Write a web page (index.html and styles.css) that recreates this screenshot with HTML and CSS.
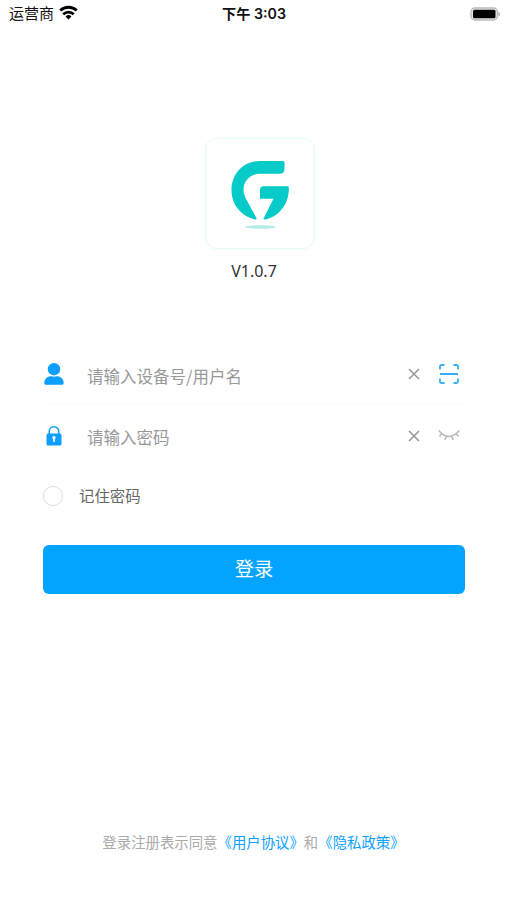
FILE: index.html
```html
<!DOCTYPE html>
<html lang="zh-CN">
<head>
    <meta charset="UTF-8">
    <meta name="viewport" content="width=device-width, initial-scale=1.0">
    <title>登录</title>
    <link rel="stylesheet" href="styles.css">
</head>
<body>
    <div class="screen">
        <header class="status-bar">
            <div class="carrier">
                <span>运营商</span>
                <svg class="wifi" viewBox="0 0 18 14">
                    <path d="M1.2 5.2a11.2 11.2 0 0 1 15.6 0" fill="none" stroke="#000" stroke-width="2.7"/>
                    <path d="M4 8.6a7.2 7.2 0 0 1 10 0" fill="none" stroke="#000" stroke-width="2.5"/>
                    <path d="M9 13.6 6.2 10.8a4 4 0 0 1 5.6 0z"/>
                </svg>
            </div>
            <div class="time">下午 3:03</div>
            <svg class="battery" viewBox="0 0 31 15">
                <rect x="1" y="1" width="26.5" height="12" rx="4" fill="#e8e8e8" stroke="#bbb" stroke-width="1.4"/>
                <rect x="3" y="2.7" width="22.5" height="8.6" rx="1.5"/>
                <path d="M28.5 4.7a2.5 2.5 0 0 1 0 4.6z" fill="#aaa"/>
            </svg>
        </header>

        <section class="brand">
            <div class="logo">
                <svg viewBox="0 0 60 70">
                    <path d="M52 0H29C12 0 .5 13 .5 29c0 15 10 26.500 24 29.500 1 .2 1.500-.5 1-1.300L14.500 37C8.500 24 17 12.700 29 12.700h20.500q4-.5 4-5V1.500Q53.500 0 52 0z" fill="#07cbc9"/>
                    <path d="M32.500 25.300h24.300q1 0 1 1.200C58.500 42.500 48 56 34 58.500c-1.300.2-1.800-.6-1.200-1.600l9.700-19.200H29V29q0-3.700 3.500-3.700z" fill="#07cbc9"/>
                    <ellipse cx="29.500" cy="66" rx="15.500" ry="1.800" fill="#b4ebe9"/>
                </svg>
            </div>
            <p class="version">V1.0.7</p>
        </section>

        <form class="login-form">
            <div class="field">
                <svg class="field-icon" viewBox="0 0 22 24">
                    <circle cx="11" cy="7.2" r="6.2"/>
                    <path d="M2.500 22.700C.5 22.700 1 17.500 4 15.500q2.500-1.500 4.500-1.200 2.500.8 5 0 2-.3 4.500 1.200c3 2 3.500 7.200 1.500 7.200z"/>
                </svg>
                <input class="field-input" type="text" placeholder="请输入设备号/用户名">
                <svg class="clear" viewBox="0 0 14 14">
                    <path d="M2 2l10 10M12 2 2 12"/>
                </svg>
                <svg class="scan" viewBox="0 0 22 22">
                    <path d="M2 6.500V3.500Q2 2 3.500 2h3M15.500 2h3Q20 2 20 3.500v3M20 15.500v3q0 1.500-1.500 1.500h-3M6.500 20h-3Q2 20 2 18.500v-3M2 11h18"/>
                </svg>
            </div>
            <div class="field">
                <svg class="field-icon" viewBox="0 0 22 24">
                    <path d="M6.200 10V7.500a4.800 4.800 0 0 1 9.600 0V10" fill="none" stroke="#0c9fff" stroke-width="1.5"/>
                    <rect x="3.500" y="9.500" width="15" height="12" rx="1.500"/>
                    <path d="M11 12a1.700 1.700 0 0 0-.8 3.200V18h1.600v-2.800A1.700 1.700 0 0 0 11 12z" fill="#fff"/>
                </svg>
                <input class="field-input" type="password" placeholder="请输入密码">
                <svg class="clear" viewBox="0 0 14 14">
                    <path d="M2 2l10 10M12 2 2 12"/>
                </svg>
                <svg class="eye" viewBox="0 0 22 22">
                    <path d="M.7 5.500q10.300 12 20.600 0M3.700 8.500l-2.200 3M8.200 11l-1.200 4M13.800 11l1.200 4M18.300 8.500l2.200 3"/>
                </svg>
            </div>

            <label class="remember">
                <input class="remember-check" type="checkbox">
                <span>记住密码</span>
            </label>

            <button class="login-button" type="button">登录</button>
        </form>

        <footer class="agreement">登录注册表示同意<a class="agreement-link" href="#">《用户协议》</a>和<a class="agreement-link" href="#">《隐私政策》</a></footer>
    </div>
</body>
</html>
```
FILE: styles.css
```css
* {
    margin: 0;
    padding: 0;
    box-sizing: border-box;
}

body {
    font-family: "Liberation Sans", "Noto Sans CJK SC", sans-serif;
    background: #fff;
    color: #333;
}

.screen {
    display: flex;
    flex-direction: column;
    height: 900px;
    overflow: hidden;
}

/* status bar */
.status-bar {
    display: grid;
    grid-template-columns: 1fr auto 1fr;
    align-items: center;
    height: 28px;
    padding: 0 6px 0 9px;
    color: #111;
}

.carrier {
    display: flex;
    align-items: center;
    gap: 5px;
    font-size: 15px;
    line-height: 28px;
}

.wifi {
    width: 19px;
    height: 15px;
    margin-top: -3px;
}

.time {
    padding-right: 2px;
    font-family: Inter, "Noto Sans CJK SC", sans-serif;
    font-size: 14.2px;
    font-weight: 600;
    line-height: 28px;
}

.battery {
    width: 31px;
    height: 15px;
    justify-self: end;
}

/* logo and version */
.brand {
    display: flex;
    flex-direction: column;
    align-items: center;
    padding: 110px 0 0 12px;
}

.logo {
    display: flex;
    justify-content: center;
    width: 110px;
    height: 111px;
    padding: 22px 0 0 2px;
    border: 1px solid #e2fbf7;
    border-radius: 12px;
    box-shadow: 0 0 3px #effdfb;
}

.logo svg {
    width: 60px;
    height: 70px;
}

.version {
    margin-top: 10px;
    padding-right: 11px;
    font-family: "Noto Sans", sans-serif;
    font-size: 16px;
    line-height: 24px;
}

/* form */
.login-form {
    padding: 61px 42px 0 43px;
}

.field {
    display: flex;
    align-items: center;
    height: 61px;
    border-bottom: 1px solid #fbfbfb;
}

.field + .field {
    border-bottom: none;
}

.field-icon {
    width: 22px;
    height: 24px;
    fill: #0c9fff;
}

.field-input {
    flex: 1;
    min-width: 0;
    height: 40px;
    margin-left: 22px;
    padding-top: 3px;
    border: none;
    outline: none;
    background: none;
    font-family: "Noto Sans CJK SC", sans-serif;
    font-size: 16.5px;
    color: #333;
}

.field-input::placeholder {
    color: #999;
}

.clear {
    width: 14px;
    height: 14px;
    fill: none;
    stroke: #999;
    stroke-width: 1.6;
}

.scan,
.eye {
    width: 22px;
    height: 22px;
    margin: 0 5px 0 17px;
    fill: none;
    stroke: #35aff0;
    stroke-width: 1.8;
}

.eye {
    stroke: #bbb;
    stroke-width: 1.6;
}

.remember {
    display: flex;
    align-items: center;
    gap: 16px;
    height: 60px;
    font-size: 15.4px;
    color: #666;
}

.remember span {
    margin-top: -2px;
}

.remember-check {
    appearance: none;
    width: 20px;
    height: 20px;
    border: 1px solid #ddd;
    border-radius: 50%;
}

.login-button {
    display: block;
    width: 100%;
    height: 49px;
    margin-top: 19px;
    padding-bottom: 4px;
    border: none;
    border-radius: 6px;
    background: #02a4ff;
    color: #fff;
    font-family: inherit;
    font-size: 19.3px;
}

/* agreement */
.agreement {
    margin: auto 0 46px;
    text-align: center;
    font-size: 14.4px;
    line-height: 22px;
    color: #aaa;
}

.agreement-link {
    color: #0c9fff;
    text-decoration: none;
}
```
